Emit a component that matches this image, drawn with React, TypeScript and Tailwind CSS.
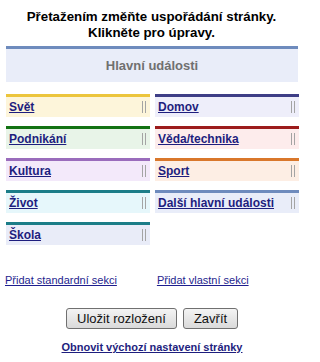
import React from "react";

type Sec = { label: string; border: string; bg: string };

const left: Sec[] = [
  { label: "Svět", border: "border-[#ecc53c]", bg: "bg-[#fdf5da]" },
  { label: "Podnikání", border: "border-[#137213]", bg: "bg-[#e8f4e8]" },
  { label: "Kultura", border: "border-[#9a6cbc]", bg: "bg-[#f3e9fa]" },
  { label: "Život", border: "border-[#1b7d88]", bg: "bg-[#e6f7fb]" },
  { label: "Škola", border: "border-[#1b7d88]", bg: "bg-[#e9ecf8]" },
];

const right: Sec[] = [
  { label: "Domov", border: "border-[#3e3e86]", bg: "bg-[#eeeefa]" },
  { label: "Věda/technika", border: "border-[#9c1b1b]", bg: "bg-[#fdecec]" },
  { label: "Sport", border: "border-[#d9772b]", bg: "bg-[#fdeee4]" },
  { label: "Další hlavní události", border: "border-[#6e8bbd]", bg: "bg-[#e9edf9]" },
];

function Handle() {
  return (
    <div className="flex gap-[2px] h-[12px] mr-[4px]">
      <div className="w-[1px] h-full bg-[#a4a4a4]" />
      <div className="w-[1px] h-full bg-[#a4a4a4]" />
    </div>
  );
}

function Section({ s }: { s: Sec }) {
  return (
    <div className={`border-t-[3px] ${s.border} ${s.bg} h-[23px] flex items-center justify-between pl-[3px]`}>
      <a className="text-[12px] leading-[20px] font-bold text-[#1e1e7e] underline">{s.label}</a>
      <Handle />
    </div>
  );
}

export default function App() {
  return (
    <div className="w-[303px] h-[362px] bg-white font-['Liberation_Sans',Arial,sans-serif] text-black">
      <div className="pt-[9px] text-center text-[13.3px] leading-[16px] font-bold">
        <div>Přetažením změňte uspořádání stránky.</div>
        <div>Klikněte pro úpravy.</div>
      </div>
      <div className="ml-[6px] mr-[5px] mt-[5px] h-[36px] border-t-[3px] border-[#6e8bbd] bg-[#e9edf9] flex items-center justify-center">
        <span className="text-[13px] font-bold text-[#707070]">Hlavní události</span>
      </div>
      <div className="ml-[6px] mr-[4px] mt-[12px] grid grid-cols-2 gap-x-[5px] items-start">
        <div className="flex flex-col gap-[9px]">
          {left.map((s) => (
            <Section key={s.label} s={s} />
          ))}
        </div>
        <div className="flex flex-col gap-[9px]">
          {right.map((s) => (
            <Section key={s.label} s={s} />
          ))}
        </div>
      </div>
      <div className="mt-[29px] flex text-[11px] leading-[13px] text-[#1e1e8e]">
        <a className="ml-[5px] underline">Přidat standardní sekci</a>
        <a className="ml-[40px] underline">Přidat vlastní sekci</a>
      </div>
      <div className="mt-[21px] flex justify-center gap-[6px] pl-[1px]">
        <button className="h-[21px] w-[111px] rounded-[3px] border border-[#707070] bg-gradient-to-b from-[#f4f4f4] to-[#dadada] text-[13px] text-[#111] leading-[19px]">
          Uložit rozložení
        </button>
        <button className="h-[21px] w-[55px] rounded-[3px] border border-[#707070] bg-gradient-to-b from-[#f4f4f4] to-[#dadada] text-[13px] text-[#111] leading-[19px]">
          Zavřít
        </button>
      </div>
      <div className="mt-[5px] text-center pl-[1px]">
        <a className="text-[11px] leading-[14px] font-bold underline text-[#1e1e7e]">Obnovit výchozí nastavení stránky</a>
      </div>
    </div>
  );
}
